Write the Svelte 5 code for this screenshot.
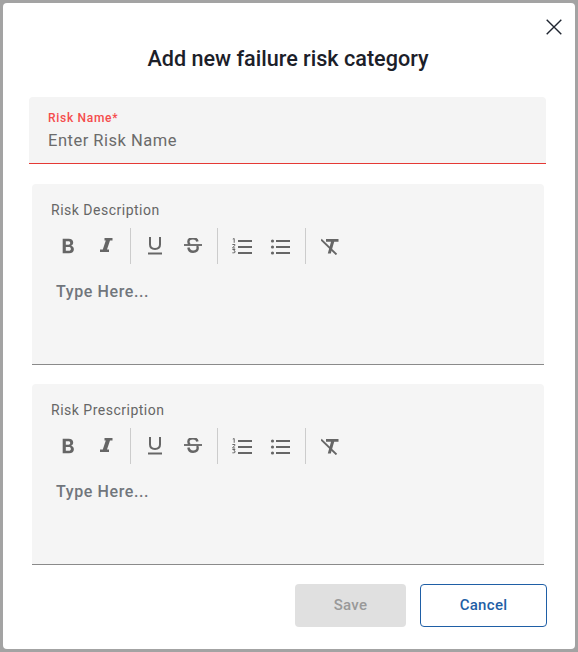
<script>
  const editors = [{ label: 'Risk Description' }, { label: 'Risk Prescription' }];
</script>

<div class="backdrop">
  <div class="dialog">
    <button class="close" type="button" aria-label="Close">
      <svg width="16" height="16" viewBox="0 0 16 16"><path d="M.7.7l14.6 14.6M15.3.7L.7 15.3" fill="none" stroke="#1f2530" stroke-width="1.4" /></svg>
    </button>
    <h2>Add new failure risk category</h2>

    <div class="name-field">
      <span class="name-label">Risk Name*</span>
      <span class="name-input">Enter Risk Name</span>
    </div>

    {#each editors as editor}
      <div class="editor">
        <span class="editor-label">{editor.label}</span>
        <div class="toolbar">
          <div class="group first">
            <button type="button" aria-label="Bold">
              <svg width="14" height="18" viewBox=".5 .5 12.500 16"><path d="M2 2h5.400c2.500 0 4 1.300 4 3.400 0 1.300-.7 2.400-1.900 2.900 1.600.4 2.500 1.600 2.500 3.200 0 2.300-1.600 3.500-4.200 3.500H2zM4.800 4.300v3h2.300c1.100 0 1.600-.6 1.600-1.500 0-1-.6-1.500-1.600-1.500zm0 5.200v3.200h2.600c1.200 0 1.900-.6 1.900-1.600s-.7-1.600-1.900-1.600z" fill="#666" /></svg>
            </button>
            <button type="button" aria-label="Italic">
              <svg width="14" height="18" viewBox="0 0 14 18"><path d="M5.500 1h8v2.600H11L8 12.400h2V15H1v-2.600h2.800l3-8.800H5.500z" fill="#666" /></svg>
            </button>
          </div>
          <div class="group">
            <button type="button" aria-label="Underline">
              <svg width="16" height="20" viewBox="0 0 16 20"><path d="M3 1v7.500c0 2.900 2 4.400 5 4.400s5-1.500 5-4.400V1" fill="none" stroke="#666" stroke-width="2" /><path d="M1 17.500h14" stroke="#666" stroke-width="2" /></svg>
            </button>
            <button type="button" aria-label="Strikethrough">
              <svg width="18" height="16" viewBox="0 1 18 16"><path d="M13.500 4.500C13 2.500 11.300 1.300 9 1.300 6.300 1.300 4.400 2.700 4.400 4.800c0 1.100.5 2 1.400 2.600M4.400 10.500c.3 2.600 2.200 4.200 4.700 4.200 2.700 0 4.600-1.500 4.600-3.600 0-.8-.2-1.500-.7-2.100" fill="none" stroke="#666" stroke-width="2.400" /><path d="M0 8h18" stroke="#666" stroke-width="1.800" /></svg>
            </button>
          </div>
          <div class="group lists">
            <button type="button" aria-label="Ordered list">
              <svg width="20" height="17" viewBox="0 0 20 17"><path d="M.8 1.100L2.200.5v4.300M.4 6.500h2.500v1L.6 9.600v.4h2.500M.4 11.500h2.600l-1.100 1.400c.9 0 1.300.4 1.300.9 0 .7-.5 1-1.400 1H.4" fill="none" stroke="#666" stroke-width="1" /><path d="M6 3h14M6 9h14M6 15h14" stroke="#666" stroke-width="2" /></svg>
            </button>
            <button type="button" aria-label="Bullet list">
              <svg width="20" height="17" viewBox="0 0 20 17"><circle cx="2.500" cy="3" r="1.600" fill="#666" /><circle cx="2.500" cy="9" r="1.600" fill="#666" /><circle cx="2.500" cy="15" r="1.600" fill="#666" /><path d="M6 3h14M6 9h14M6 15h14" stroke="#666" stroke-width="2" /></svg>
            </button>
          </div>
          <div class="group last">
            <button type="button" aria-label="Clear formatting">
              <svg width="19" height="18" viewBox="1 0 19 18"><path d="M6 2h12.500v2.700H14.200L10.800 16.500H7.800l3.200-11.800H6z" fill="#666" /><path d="M1 2.500l15.500 15" stroke="#666" stroke-width="1.800" /></svg>
            </button>
          </div>
        </div>
        <div class="placeholder">Type Here...</div>
      </div>
    {/each}

    <div class="actions">
      <button class="save" type="button" disabled>Save</button>
      <button class="cancel" type="button">Cancel</button>
    </div>
  </div>
</div>

<style>
  :global(body) {
    margin: 0;
  }

  .backdrop {
    box-sizing: border-box;
    width: 578px;
    height: 652px;
    padding: 3px;
    background: #a3a3a3;
    font-family: Roboto, sans-serif;
  }

  .dialog {
    position: relative;
    box-sizing: border-box;
    height: 646px;
    background: #fff;
    border-radius: 4px;
    padding: 0 28px 0 26px;
    display: flex;
    flex-direction: column;
    align-items: flex-start;
  }

  .close {
    position: absolute;
    top: 16px;
    right: 13px;
    padding: 0;
    border: 0;
    background: none;
    display: flex;
  }

  h2 {
    align-self: stretch;
    margin: 42px 0 0;
    font-size: 21.600px;
    line-height: 28px;
    font-weight: 500;
    color: #1c2029;
    text-align: center;
  }

  .name-field {
    box-sizing: border-box;
    width: 517px;
    height: 67px;
    margin-top: 24px;
    padding: 14px 19px 0;
    background: #f4f4f4;
    border-bottom: 1px solid #e53935;
    border-radius: 4px 4px 0 0;
    display: flex;
    flex-direction: column;
  }

  .name-label {
    font-size: 12px;
    line-height: 15px;
    font-weight: 500;
    letter-spacing: .7px;
    color: #f44c4c;
  }

  .name-input {
    margin-top: 4px;
    font-size: 16.500px;
    line-height: 22px;
    letter-spacing: .5px;
    color: #6b6b6b;
  }

  .editor {
    box-sizing: border-box;
    width: 512px;
    height: 181px;
    margin: 20px 0 0 3px;
    padding: 18px 0 0 19px;
    background: #f5f5f5;
    border-bottom: 1px solid #8a8a8a;
    border-radius: 4px 4px 0 0;
  }

  .editor + .editor {
    margin-top: 19px;
  }

  .editor-label {
    display: block;
    font-size: 14px;
    line-height: 16px;
    letter-spacing: .5px;
    color: #666;
  }

  .toolbar {
    display: flex;
    height: 36px;
    margin-top: 10px;
  }

  .group {
    display: flex;
    gap: 4px;
    padding: 0 7px;
    border-right: 1px solid #ccc;
  }

  .group.first {
    padding-left: 0;
  }

  .group.lists {
    padding-right: 8px;
  }

  .group.last {
    border: 0;
  }

  .group button {
    width: 34px;
    height: 36px;
    padding: 0;
    border: 0;
    background: none;
    display: flex;
    align-items: center;
    justify-content: center;
  }

  .placeholder {
    margin: 18px 0 0 5px;
    font-size: 16px;
    line-height: 20px;
    font-weight: 500;
    letter-spacing: .6px;
    color: #71767c;
  }

  .actions {
    display: flex;
    align-self: flex-end;
    gap: 14px;
    margin-top: 19px;
  }

  .actions button {
    height: 43px;
    padding: 0 0 2px;
    font-family: inherit;
    font-size: 15px;
    font-weight: 500;
    letter-spacing: .3px;
    border-radius: 4px;
  }

  .save {
    width: 111px;
    border: 0;
    background: #e0e0e0;
    color: #999;
  }

  .cancel {
    width: 127px;
    border: 1px solid #1f5fa6;
    background: #fff;
    color: #1f5fa6;
  }
</style>
